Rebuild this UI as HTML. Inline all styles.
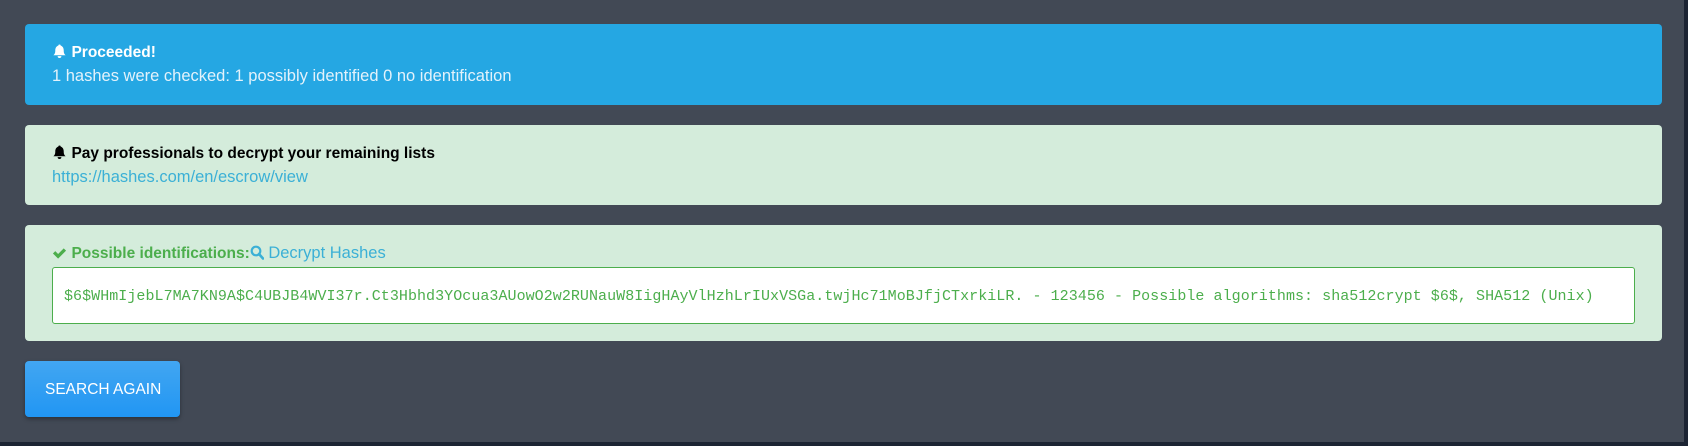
<!DOCTYPE html>
<html><head><meta charset="utf-8"><style>
html,body{margin:0;padding:0}
body{width:1688px;height:446px;background:#424955;position:relative;overflow:hidden;font-family:"Liberation Sans",sans-serif;font-size:16px}
.box{position:absolute;left:25px;width:1637px;border-radius:4px}
.t{position:absolute;left:52px;white-space:nowrap;line-height:20px}
b{font-weight:bold;font-size:15.5px}
svg{vertical-align:-2px}
</style></head><body>
<div class="box" style="top:24px;height:81px;background:#25a7e3"></div>
<div class="t" style="top:43px;color:#fff"><svg width="15" height="16" viewBox="0 0 16 16"><path d="M8 1a1.3 1.3 0 0 1 1.3 1.3C11.5 3 12.5 5 12.5 7.5c0 3 .8 4 2 5H1.5c1.2-1 2-2 2-5C3.5 5 4.5 3 6.7 2.3A1.3 1.3 0 0 1 8 1zM6 13.5h4a2 2 0 0 1-4 0z" fill="#fff"/></svg> <b>Proceeded!</b></div>
<div class="t" style="top:66px;color:#e3f2fb;font-size:16.5px">1 hashes were checked: 1 possibly identified 0 no identification</div>

<div class="box" style="top:125px;height:80px;background:#d4ecdb"></div>
<div class="t" style="top:144px;color:#000"><svg width="15" height="16" viewBox="0 0 16 16"><path d="M8 1a1.3 1.3 0 0 1 1.3 1.3C11.5 3 12.5 5 12.5 7.5c0 3 .8 4 2 5H1.5c1.2-1 2-2 2-5C3.5 5 4.5 3 6.7 2.3A1.3 1.3 0 0 1 8 1zM6 13.5h4a2 2 0 0 1-4 0z" fill="#000"/></svg> <b>Pay professionals to decrypt your remaining lists</b></div>
<div class="t" style="top:167px;color:#3bb0d6;font-size:16.5px">https://hashes.com/en/escrow/view</div>

<div class="box" style="top:225px;height:116px;background:#d4ecdb"></div>
<div class="t" style="top:243px;color:#4cae4c"><svg width="15" height="14" viewBox="0 0 16 14"><path d="M1 7.5l2.5-2.5 3 3L12.5 2 15 4.5 6.5 13z" fill="#4cae4c"/></svg> <b>Possible identifications:</b><svg width="14" height="15" viewBox="0 0 14 15"><circle cx="6" cy="6" r="4.3" fill="none" stroke="#3bb0d6" stroke-width="2.2"/><path d="M9 9l4 4.5" stroke="#3bb0d6" stroke-width="2.6" stroke-linecap="round"/></svg><span style="color:#3bb0d6;font-size:16.5px"> Decrypt Hashes</span></div>
<div style="position:absolute;left:52px;top:267px;width:1581px;height:55px;background:#fff;border:1px solid #4cae4c;border-radius:3px"></div>
<div class="t" style="left:64px;top:287px;font-family:'Liberation Mono',monospace;font-size:15px;letter-spacing:0.05px;color:#4cae4c">$6$WHmIjebL7MA7KN9A$C4UBJB4WVI37r.Ct3Hbhd3YOcua3AUowO2w2RUNauW8IigHAyVlHzhLrIUxVSGa.twjHc71MoBJfjCTxrkiLR. - 123456 - Possible algorithms: sha512crypt $6$, SHA512 (Unix)</div>

<div style="position:absolute;left:25px;top:361px;width:155px;height:56px;border-radius:4px;background:linear-gradient(#42a6f2,#2196f3);box-shadow:0 2px 4px rgba(0,0,0,.35)"></div>
<div class="t" style="left:45px;top:380px;color:#fff;font-size:15.5px">SEARCH AGAIN</div>
<div style="position:absolute;left:0;top:442px;width:1688px;height:4px;background:#1c2433"></div>
<div style="position:absolute;left:1684px;top:0;width:4px;height:446px;background:#1c2433"></div>
</body></html>
